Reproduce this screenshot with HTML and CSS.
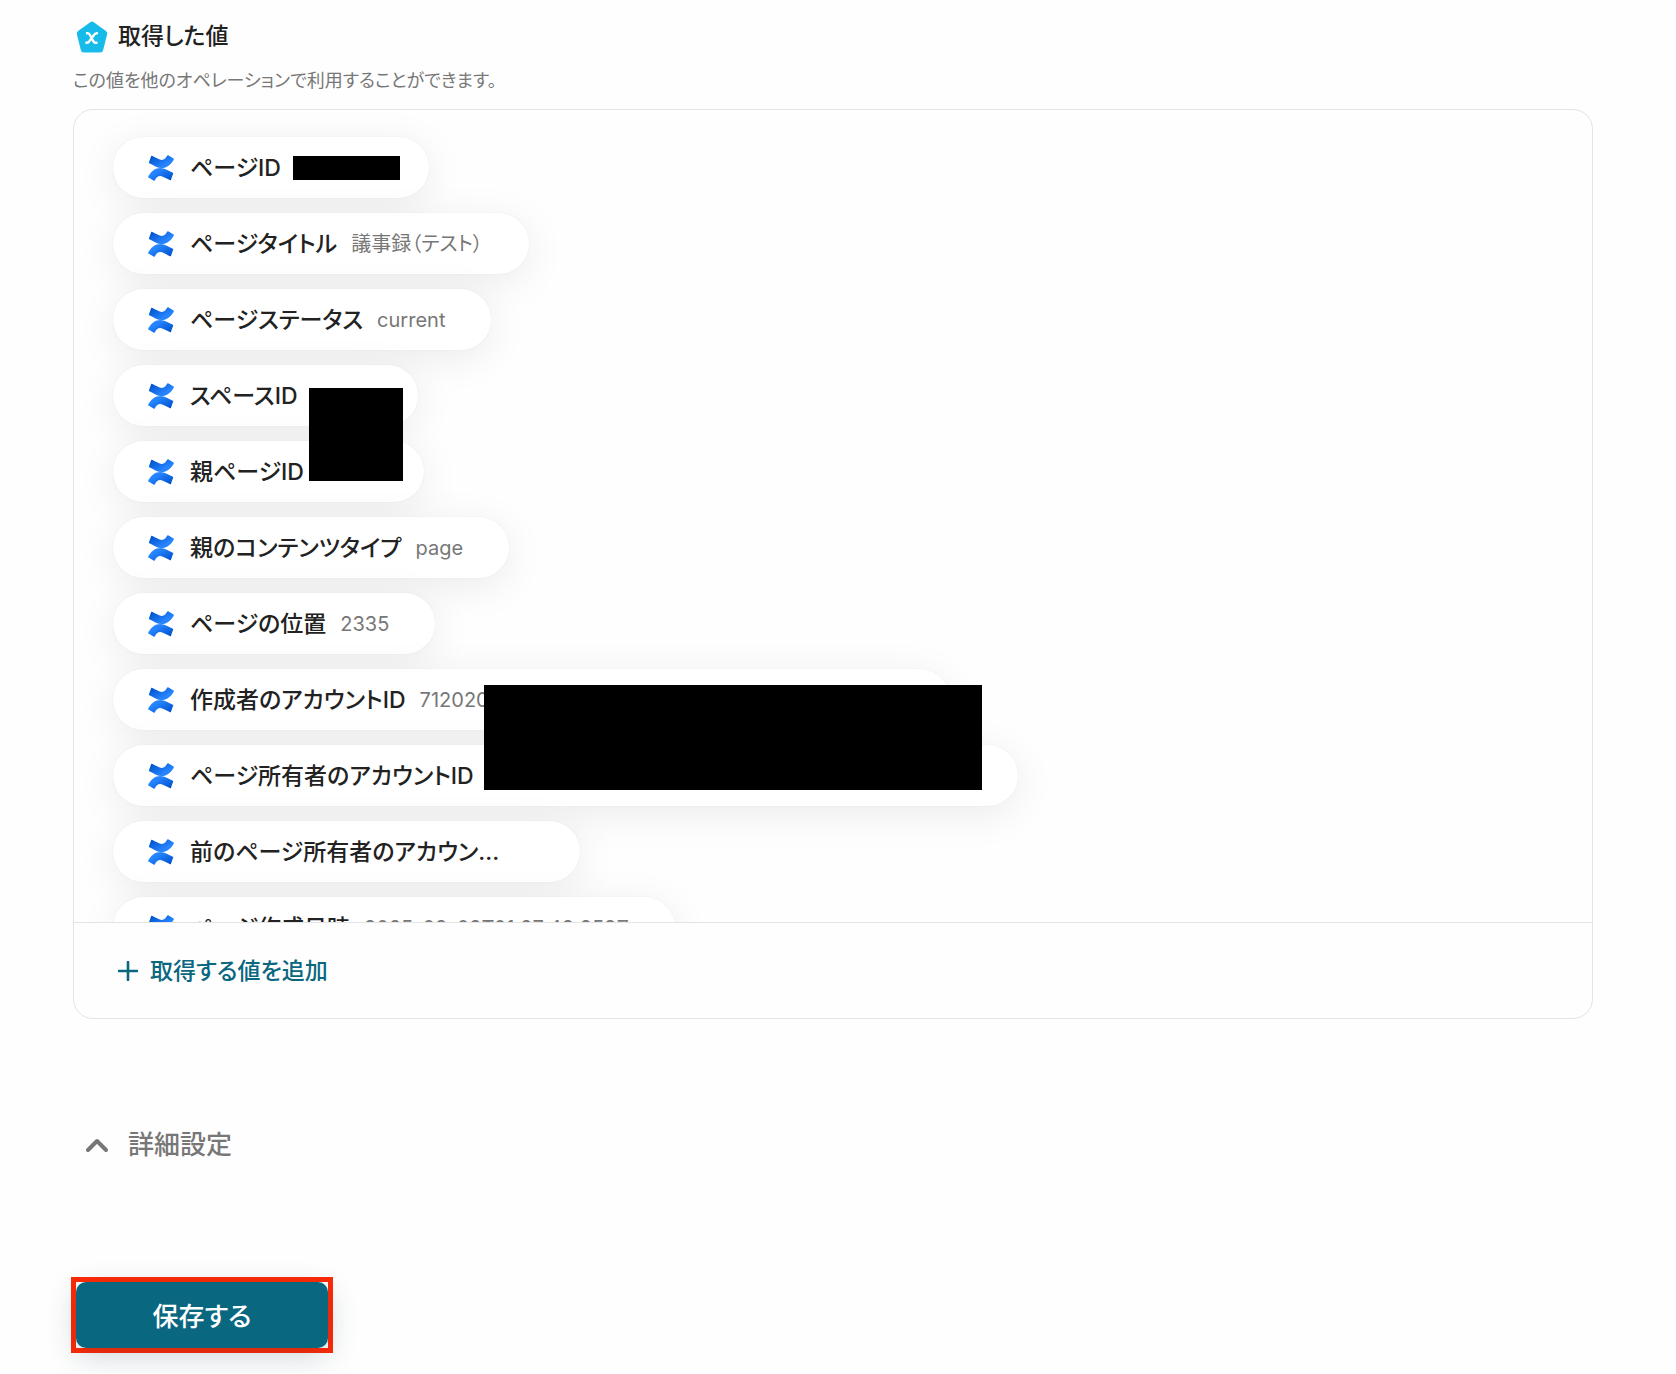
FILE: index.html
```html
<!DOCTYPE html>
<html lang="ja">
<head>
    <meta charset="UTF-8">
    <meta name="viewport" content="width=device-width, initial-scale=1.0">
    <title>取得した値</title>
    <link rel="stylesheet" href="styles.css">
</head>
<body>
    <!-- アイコン定義 -->
    <svg class="defs" width="0" height="0" aria-hidden="true">
        <defs>
            <linearGradient id="waveBottom" x1="100%" y1="80%" x2="30%" y2="20%">
                <stop offset="0" stop-color="#0052cc"/>
                <stop offset="0.9" stop-color="#2684ff"/>
            </linearGradient>
            <linearGradient id="waveTop" x1="0%" y1="20%" x2="70%" y2="80%">
                <stop offset="0" stop-color="#0052cc"/>
                <stop offset="0.9" stop-color="#2684ff"/>
            </linearGradient>
            <symbol id="confluence" viewBox="0 0 26 26">
                <path fill="url(#waveTop)" d="M3.2 0.9 L0.9 7.4 Q0.8 7.9 1.3 8.2 C5.5 10.2 9.5 13.1 13.6 13.1 C18.8 13.1 22.8 9.8 25.8 4.4 Q26 3.9 25.6 3.6 L20.1 0.2 Q19.6 0 19.3 0.5 C17.8 3.1 16.4 4.9 13.8 4.9 C11.4 4.9 8 2.6 3.9 0.7 Q3.4 0.5 3.2 0.9Z"/>
                <path fill="url(#waveBottom)" d="M22.9 25.1 L25.2 18.6 Q25.4 18.1 24.9 17.8 C20.8 15.8 16.6 12.9 12.5 12.9 C7.2 12.9 3.2 16.2 0.2 21.6 Q0 22.1 0.4 22.4 L5.9 25.8 Q6.4 26 6.7 25.5 C8.2 22.9 9.6 21.1 12.2 21.1 C14.6 21.1 18.1 23.4 22.2 25.3 Q22.7 25.5 22.9 25.1Z"/>
            </symbol>
        </defs>
    </svg>

    <main class="page">
        <header class="section-header">
            <svg class="section-icon" viewBox="0 0 32 32" aria-hidden="true">
                <path fill="#17bbea" stroke="#17bbea" stroke-width="6" stroke-linejoin="round" d="M16 3.6 L28.2 12.4 L24.2 28.4 L7.8 28.4 L3.8 12.4Z"/>
                <path fill="none" stroke="#fff" stroke-width="2.4" stroke-linecap="round" d="M11 12.2 Q13 11.8 14 14 L17.2 20 Q18.2 22.2 20.6 21.8 M21 12.2 Q19.2 12 17.8 14.2 L13.6 19.8 Q12.4 21.8 10.4 21.8"/>
            </svg>
            <h2 class="section-title">取得した値</h2>
        </header>
        <p class="section-note">この値を他のオペレーションで利用することができます。</p>

        <section class="panel">
            <ul class="value-list">
                <li class="value"><svg class="value-icon"><use href="#confluence"/></svg><span class="value-name">ページID</span><span class="value-text value-text-id"><span class="mask mask-page"></span></span></li>
                <li class="value"><svg class="value-icon"><use href="#confluence"/></svg><span class="value-name">ページタイトル</span><span class="value-text">議事録（テスト）</span></li>
                <li class="value"><svg class="value-icon"><use href="#confluence"/></svg><span class="value-name">ページステータス</span><span class="value-text">current</span></li>
                <li class="value"><svg class="value-icon"><use href="#confluence"/></svg><span class="value-name">スペースID</span><span class="value-text value-text-short"></span></li>
                <li class="value"><svg class="value-icon"><use href="#confluence"/></svg><span class="value-name">親ページID</span><span class="value-text value-text-short"></span></li>
                <li class="value"><svg class="value-icon"><use href="#confluence"/></svg><span class="value-name">親のコンテンツタイプ</span><span class="value-text">page</span></li>
                <li class="value"><svg class="value-icon"><use href="#confluence"/></svg><span class="value-name">ページの位置</span><span class="value-text">2335</span></li>
                <li class="value"><svg class="value-icon"><use href="#confluence"/></svg><span class="value-name">作成者のアカウントID</span><span class="value-text value-text-long">712020</span></li>
                <li class="value"><svg class="value-icon"><use href="#confluence"/></svg><span class="value-name">ページ所有者のアカウントID</span><span class="value-text value-text-long"></span></li>
                <li class="value"><svg class="value-icon"><use href="#confluence"/></svg><span class="value-name value-name-cut">前のページ所有者のアカウン...</span><span class="value-text"></span></li>
                <li class="value"><svg class="value-icon"><use href="#confluence"/></svg><span class="value-name">ページ作成日時</span><span class="value-text">2025-09-02T01:27:42.259Z</span></li>
                <li class="mask mask-space"></li>
                <li class="mask mask-account"></li>
            </ul>
            <div class="panel-footer">
                <button type="button" class="add-button">
                    <svg class="add-icon" viewBox="0 0 20 20" aria-hidden="true"><path d="M10 1V19M1 10H19"/></svg>
                    取得する値を追加
                </button>
            </div>
        </section>

        <button type="button" class="detail-toggle">
            <svg class="detail-icon" viewBox="0 0 22 14" aria-hidden="true"><path d="M2 12L11 3L20 12"/></svg>
            詳細設定
        </button>

        <div class="save-frame">
            <button type="button" class="save-button">保存する</button>
        </div>
    </main>
</body>
</html>
```
FILE: styles.css
```css
* {
    box-sizing: border-box;
}
body {
    margin: 0;
    background-color: #fefefe;
    color: #222;
    font-family: Inter, 'Noto Sans CJK JP', sans-serif;
    font-feature-settings: "palt";
}
button {
    padding: 0;
    border: none;
    background: none;
    font: inherit;
    font-feature-settings: inherit;
    font-weight: 500;
    cursor: pointer;
}
.defs {
    position: absolute;
}
.page {
    padding: 20px 83px 20px 73px;
}
.section-header {
    display: flex;
    align-items: flex-start;
    gap: 10px;
    padding-left: 3px;
}
.section-icon {
    width: 32px;
    height: 34px;
}
.section-title {
    margin: 0;
    font-size: 23px;
    line-height: 32px;
    font-weight: 500;
}
.section-note {
    margin: 13px 0 14px;
    color: #777;
    font-size: 18px;
    line-height: 28px;
    font-weight: 400;
}

/* 値の一覧 */
.panel {
    border: 1px solid #e4e4e4;
    border-radius: 20px;
    overflow: hidden;
}
.value-list {
    position: relative;
    display: flex;
    flex-direction: column;
    align-items: flex-start;
    gap: 15px;
    height: 812px;
    margin: 0;
    padding: 27px 39px;
    overflow: hidden;
    list-style: none;
}
.value {
    display: flex;
    flex-shrink: 0;
    align-items: center;
    height: 61px;
    padding: 0 46px 0 35px;
    border-radius: 31px;
    background-color: #fff;
    box-shadow: 0 8px 40px rgba(0, 0, 0, 0.08), 0 0 2px rgba(0, 0, 0, 0.06);
}
.value-icon {
    width: 26px;
    height: 26px;
    margin-right: 16px;
}
.value-name {
    font-size: 23px;
    line-height: 32px;
    font-weight: 500;
}
.value-name-cut {
    width: 330px;
}
.value-text {
    margin-left: 14px;
    color: #777;
    font-size: 20px;
    line-height: 28px;
    font-weight: 400;
}
.value-text-id {
    position: relative;
    width: 88px;
    height: 24px;
}
.value-text-short {
    width: 60px;
}
.value-text-long {
    width: 484px;
}

/* 伏せ字 */
.mask {
    position: absolute;
    background-color: #000;
}
.mask-page {
    top: 0;
    left: -2px;
    width: 107px;
    height: 24px;
}
.mask-space {
    top: 278px;
    left: 235px;
    width: 94px;
    height: 93px;
}
.mask-account {
    top: 575px;
    left: 410px;
    width: 498px;
    height: 105px;
}
.panel-footer {
    padding: 32px 44px 31px;
    border-top: 1px solid #e4e4e4;
}
.add-button {
    display: flex;
    align-items: center;
    gap: 12px;
    color: #0a6780;
    font-size: 23px;
    line-height: 32px;
}
.add-icon {
    width: 20px;
    height: 20px;
    fill: none;
    stroke: currentColor;
    stroke-width: 2.6;
    stroke-linecap: round;
}

/* 詳細設定と保存 */
.detail-toggle {
    display: flex;
    align-items: center;
    gap: 20px;
    margin: 108px 0 0 13px;
    color: #777;
    font-size: 26px;
    line-height: 36px;
}
.detail-icon {
    width: 22px;
    height: 14px;
    fill: none;
    stroke: currentColor;
    stroke-width: 4;
    stroke-linecap: round;
    stroke-linejoin: round;
}
.save-frame {
    width: 262px;
    margin: 114px 0 0 -2px;
    border: 5px solid #ff2a05;
}
.save-button {
    display: block;
    width: 100%;
    height: 66px;
    padding-bottom: 2px;
    border-radius: 10px;
    background-color: #0a6780;
    box-shadow: 0 8px 30px rgba(20, 50, 70, 0.2);
    color: #fff;
    font-size: 26px;
}
```
